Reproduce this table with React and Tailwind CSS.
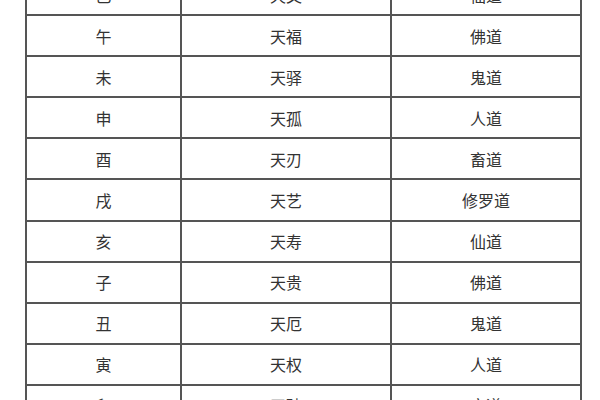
import React from "react";

const rows = [
  ["巳", "天文", "仙道"],
  ["午", "天福", "佛道"],
  ["未", "天驿", "鬼道"],
  ["申", "天孤", "人道"],
  ["酉", "天刃", "畜道"],
  ["戌", "天艺", "修罗道"],
  ["亥", "天寿", "仙道"],
  ["子", "天贵", "佛道"],
  ["丑", "天厄", "鬼道"],
  ["寅", "天权", "人道"],
  ["卯", "天破", "畜道"],
];

const App = () => {
  return (
    <div
      className="w-[600px] h-[400px] overflow-hidden bg-white"
      style={{ fontFamily: '"Noto Sans CJK SC", "Noto Sans", sans-serif' }}
    >
      <table className="ml-[25px] mt-[-27px] border-collapse text-[16px] text-[#333]">
        <tbody>
          {rows.map((r, i) => (
            <tr key={i} className="h-[41.1px]">
              <td className="w-[155px] border-2 border-[#555] text-center align-middle">
                {r[0]}
              </td>
              <td className="w-[210px] border-2 border-[#555] text-center align-middle">
                {r[1]}
              </td>
              <td className="w-[190px] border-2 border-[#555] text-center align-middle">
                {r[2]}
              </td>
            </tr>
          ))}
        </tbody>
      </table>
    </div>
  );
};

export default App;
